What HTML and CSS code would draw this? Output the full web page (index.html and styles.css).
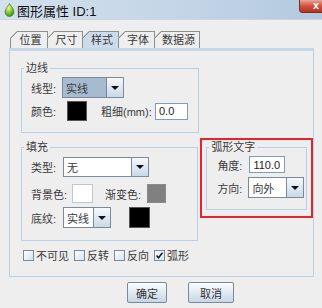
FILE: index.html
```html
<!DOCTYPE html>
<html lang="zh-CN">
<head>
  <meta charset="UTF-8">
  <title>图形属性 ID:1</title>
  <link rel="stylesheet" href="styles.css">
</head>
<body>
  <div class="window">
    <div class="titlebar">
      <svg class="app-icon" width="11" height="14" viewBox="0 0 11 14">
        <defs>
          <radialGradient id="drop" cx="0.4" cy="0.35" r="0.7">
            <stop offset="0" stop-color="#f4f7a0"/>
            <stop offset="0.45" stop-color="#8fd13c"/>
            <stop offset="1" stop-color="#2f8a1c"/>
          </radialGradient>
        </defs>
        <path d="M5.5 0.5 C4 3 1 6 1 9 A4.5 4.5 0 0 0 10 9 C10 6 7 3 5.5 0.5 Z" fill="url(#drop)" stroke="#3d7a22" stroke-width="0.6"/>
      </svg>
      <span class="title">图形属性 ID:1</span>
      <div class="close"><span>x</span></div>
    </div>

    <div class="tabs">
      <div class="tab tab-1">位置</div>
      <div class="tab tab-2">尺寸</div>
      <div class="tab tab-3 active">样式</div>
      <div class="tab tab-4">字体</div>
      <div class="tab tab-5">数据源</div>
    </div>

    <div class="panel">
      <!-- 边线 -->
      <fieldset class="group group-line">
        <legend>边线</legend>
        <div class="group-body line-body">
          <div class="row row-h21">
            <span class="label w31">线型:</span>
            <div class="combo combo-selected w62">
              <span class="combo-text">实线</span>
              <span class="combo-arrow"></span>
            </div>
          </div>
          <div class="row row-h20 mt3">
            <span class="label w36">颜色:</span>
            <span class="swatch swatch-black sw20"></span>
            <span class="label label-thick">粗细(mm):</span>
            <span class="field field-thick">0.0</span>
          </div>
        </div>
      </fieldset>

      <div class="fill-row">
        <!-- 填充 -->
        <fieldset class="group group-fill">
          <legend>填充</legend>
          <div class="group-body fill-body">
            <div class="row row-h20">
              <span class="label w32">类型:</span>
              <div class="combo w86">
                <span class="combo-text">无</span>
                <span class="combo-arrow"></span>
              </div>
            </div>
            <div class="row row-h19 mt7">
              <span class="label w41">背景色:</span>
              <span class="swatch swatch-white sw21"></span>
              <span class="label label-grad">渐变色:</span>
              <span class="swatch swatch-grey sw19"></span>
            </div>
            <div class="row row-h21 mt4">
              <span class="label w32">底纹:</span>
              <div class="combo w48">
                <span class="combo-text">实线</span>
                <span class="combo-arrow"></span>
              </div>
              <span class="swatch swatch-black sw21 ml18"></span>
            </div>
          </div>
        </fieldset>

        <!-- 弧形文字 -->
        <div class="highlight">
          <fieldset class="group group-arc">
            <legend>弧形文字</legend>
            <div class="group-body arc-body">
              <div class="row row-h17">
                <span class="label w32">角度:</span>
                <span class="field field-angle">110.0</span>
              </div>
              <div class="row row-h21 mt4">
                <span class="label w31">方向:</span>
                <div class="combo w56">
                  <span class="combo-text">向外</span>
                  <span class="combo-arrow"></span>
                </div>
              </div>
            </div>
          </fieldset>
        </div>
      </div>

      <div class="checks">
        <label class="check"><span class="box"></span>不可见</label>
        <label class="check"><span class="box"></span>反转</label>
        <label class="check"><span class="box"></span>反向</label>
        <label class="check"><span class="box checked">
          <svg width="9" height="9" viewBox="0 0 9 9"><path d="M1.5 4.5 L3.5 6.8 L7.5 1.8" fill="none" stroke="#1a1a1a" stroke-width="1.6"/></svg>
        </span>弧形</label>
      </div>
    </div>

    <div class="buttons">
      <button class="btn btn-ok">确定</button>
      <button class="btn btn-cancel">取消</button>
    </div>
  </div>
</body>
</html>
```

FILE: styles.css
```css
* {
  box-sizing: border-box;
}
body {
  margin: 0;
  font-family: "Liberation Sans", "Noto Sans CJK SC", sans-serif;
  font-size: 11px;
  color: #3a3a3a;
}
.window {
  width: 322px;
  height: 308px;
  background: #eeeeee;
  overflow: hidden;
}

/* title bar */
.titlebar {
  height: 20px;
  display: flex;
  align-items: center;
  padding-left: 4px;
  background: linear-gradient(to right, #d3e0ed, #c2d4e6 60%, #b4c9df);
  border-bottom: 1px solid #c9d6e3;
}
.app-icon {
  margin-right: 2px;
  margin-top: 1px;
}
.title {
  font-size: 13px;
  color: #111;
  margin-top: 1px;
}
.close {
  margin-left: auto;
  align-self: flex-start;
  width: 23px;
  height: 13px;
  background: linear-gradient(#e7a597, #d0533d 50%, #b8321f);
  border: 1px solid #7a2c22;
  border-top: none;
  border-right: none;
  border-radius: 0 0 0 4px;
  display: flex;
  justify-content: flex-end;
}
.close span {
  color: #fff;
  font-weight: bold;
  font-size: 11px;
  line-height: 11px;
  margin-right: 3px;
}

/* tabs */
.tabs {
  display: flex;
  margin-top: 11px;
  padding-left: 10px;
  height: 17px;
}
.tab {
  height: 17px;
  margin-right: -1px;
  border: 1px solid #8e8f8f;
  border-bottom: none;
  background-color: #eeeeee;
  background-image: linear-gradient(135deg, transparent 4.9px, #8e8f8f 4.9px, #8e8f8f 6px, transparent 6px);
  background-origin: border-box;
  clip-path: polygon(7px 0, 100% 0, 100% 100%, 0 100%, 0 7px);
  text-align: center;
  line-height: 16px;
  padding-left: 3px;
}
.tab.active {
  background-color: #cddcec;
}
.tab-1 { width: 38px; }
.tab-2 { width: 36px; }
.tab-3 { width: 37px; }
.tab-4 { width: 37px; }
.tab-5 { width: 46px; }

/* content panel */
.panel {
  margin-left: 9px;
  width: 305px;
  height: 229px;
  border: 1px solid #b8cfe5;
  border-top: 3px solid #c4d7eb;
}

.group {
  margin: 0;
  padding: 0;
  min-width: 0;
  border: 1px solid #b8cfe5;
}
.group legend {
  margin-left: 2px;
  padding: 0 2px;
  line-height: 14px;
  font-size: 11px;
}
.group-line {
  margin: 10px 0 0 11px;
  width: 178px;
}
.line-body {
  padding: 2px 0 11px 9px;
}
.fill-row {
  display: flex;
  align-items: flex-start;
  margin-top: 5px;
  padding-left: 11px;
}
.group-fill {
  margin-top: 2px;
  width: 178px;
}
.fill-body {
  padding: 3px 0 12px 9px;
}
.highlight {
  margin-left: 2px;
  width: 113px;
  height: 80px;
  border: 2px solid #e5232b;
  padding-left: 4px;
}
.group-arc {
  width: 101px;
}
.arc-body {
  padding: 2px 0 11px 10px;
}

.row {
  display: flex;
  align-items: center;
}
.row-h17 { height: 17px; }
.row-h19 { height: 19px; }
.row-h20 { height: 20px; }
.row-h21 { height: 21px; }
.mt3 { margin-top: 3px; }
.mt4 { margin-top: 4px; }
.mt7 { margin-top: 7px; }
.ml18 { margin-left: 18px; }

.label {
  white-space: nowrap;
  flex: none;
}
.w31 { width: 31px; }
.w32 { width: 32px; }
.w36 { width: 36px; }
.w41 { width: 41px; }
.label-thick {
  margin-left: 14px;
  width: 54px;
}
.label-grad {
  margin-left: 12px;
  width: 42px;
}

/* combo box */
.combo {
  display: flex;
  height: 100%;
  border: 1px solid #7a8a99;
  background: #fff;
  flex: none;
}
.w48 { width: 48px; }
.w56 { width: 56px; }
.w62 { width: 62px; }
.w86 { width: 86px; }
.combo-text {
  flex: 1;
  padding-left: 3px;
  display: flex;
  align-items: center;
}
.combo-selected .combo-text {
  background: #a6bbd0;
}
.combo-arrow {
  width: 17px;
  border-left: 1px solid #7a8a99;
  background: linear-gradient(#f6f9fc, #c9d8e8);
  display: flex;
  align-items: center;
  justify-content: center;
}
.combo-arrow::before {
  content: "";
  border-left: 4px solid transparent;
  border-right: 4px solid transparent;
  border-top: 4px solid #111;
}

/* colour swatches */
.swatch {
  display: inline-block;
  flex: none;
  height: 100%;
}
.sw19 { width: 19px; }
.sw20 { width: 20px; }
.sw21 { width: 21px; }
.swatch-black {
  background: #000;
  border: 1px solid #555;
}
.swatch-white {
  background: #fff;
  border: 1px solid #b8c8d8;
}
.swatch-grey {
  background: #808080;
  border: 1px solid #8a8a8a;
}

/* text fields */
.field {
  display: flex;
  align-items: center;
  height: 17px;
  padding-left: 3px;
  background: #fff;
  border: 1px solid #7f9db9;
  color: #222;
  flex: none;
}
.field-thick { width: 33px; }
.field-angle { width: 36px; }

/* checkboxes */
.checks {
  display: flex;
  margin-top: 8px;
  padding-left: 13px;
  height: 12px;
  align-items: center;
}
.check {
  display: flex;
  align-items: center;
  margin-right: 5px;
}
.box {
  width: 11px;
  height: 11px;
  margin-right: 2px;
  border: 1px solid #7a8a99;
  background: linear-gradient(135deg, #ffffff, #d6e2ee);
  display: flex;
  align-items: center;
  justify-content: center;
}

/* buttons */
.buttons {
  display: flex;
  gap: 21px;
  margin-top: 5px;
  padding-left: 127px;
}
.btn {
  height: 21px;
  padding: 0;
  font-family: inherit;
  font-size: 11px;
  color: #333;
  border: 1px solid #7a8a99;
  border-radius: 2px;
  background: linear-gradient(#fdfeff, #dde7f1 55%, #c7d7e8);
}
.btn-ok { width: 40px; }
.btn-cancel { width: 46px; }
```
